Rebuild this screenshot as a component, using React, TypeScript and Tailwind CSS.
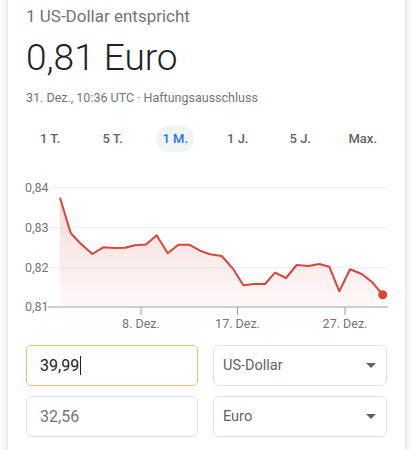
import React from "react";

const tabs = ["1 T.", "5 T.", "1 M.", "1 J.", "5 J.", "Max."];

// chart points in page coordinates
const pts: [number, number][] = [
  [60, 197.7], [70.7, 233], [80, 243], [92.3, 254], [103.3, 247.3], [115, 248],
  [125, 247.7], [135, 245.3], [146, 244.5], [156.7, 235.3], [167.7, 253.3],
  [178.3, 244.7], [189.3, 244.7], [200, 250.7], [210, 254.2], [221.7, 256],
  [232.7, 268.3], [243.3, 285.3], [254, 284], [265, 284], [275, 272.7],
  [286, 278], [296.7, 265], [308.3, 266], [319.3, 264], [329.3, 266.7],
  [339.3, 291.3], [350, 269.3], [361.7, 274], [371.7, 281.7], [382.7, 294.7],
];

const Chart = () => {
  const line = pts.map(([x, y], i) => `${i ? "L" : "M"}${x} ${y}`).join(" ");
  const area = `${line} L382.7 307 L60 307 Z`;
  const grid = [
    { y: 187.5, label: "0,84" },
    { y: 227.5, label: "0,83" },
    { y: 267.5, label: "0,82" },
  ];
  const ticks = [
    { x: 141, label: "8. Dez." },
    { x: 237.5, label: "17. Dez." },
    { x: 345, label: "27. Dez." },
  ];
  return (
    <svg viewBox="8 160 397 175" width={397} height={175} className="mt-2 block">
      <defs>
        <linearGradient id="fill" x1="0" y1="0" x2="0" y2="1">
          <stop offset="0%" stopColor="#db4437" stopOpacity="0.2" />
          <stop offset="100%" stopColor="#db4437" stopOpacity="0.03" />
        </linearGradient>
      </defs>
      {grid.map((g) => (
        <g key={g.label}>
          <line x1={49} x2={388} y1={g.y} y2={g.y} stroke="#f1f1f1" strokeWidth={1} />
          <text x={25} y={g.y + 4} fontSize={12.5} fill="#70757a" fontFamily="Roboto, sans-serif">
            {g.label}
          </text>
        </g>
      ))}
      <path d={area} fill="url(#fill)" />
      <line x1={48} x2={388} y1={307} y2={307} stroke="#9aa0a6" strokeWidth={1} />
      <text x={25} y={311} fontSize={12.5} fill="#70757a" fontFamily="Roboto, sans-serif">
        0,81
      </text>
      {ticks.map((t) => (
        <g key={t.label}>
          <line x1={t.x} x2={t.x} y1={307} y2={315} stroke="#9aa0a6" strokeWidth={1} />
          <text x={t.x} y={328} fontSize={12.5} fill="#70757a" textAnchor="middle" fontFamily="Roboto, sans-serif">
            {t.label}
          </text>
        </g>
      ))}
      <path d={line} fill="none" stroke="#db4437" strokeWidth={2} strokeLinejoin="round" />
      <circle cx={382.7} cy={294.7} r={4.5} fill="#db4437" />
    </svg>
  );
};

const Caret = () => (
  <svg width="10" height="5" viewBox="0 0 10 5">
    <path d="M0 0 L10 0 L5 5 Z" fill="#5f6368" />
  </svg>
);

export default function App() {
  return (
    <div className="h-[450px] w-[413px] overflow-hidden bg-white font-['Roboto',sans-serif]">
      <div className="mx-2 h-[470px] -mt-[10px] bg-white pt-[14px] shadow-[0_0_8px_rgba(0,0,0,0.18)]">
        <div className="px-[18px]">
          <div className="text-[17px] leading-6 text-[#70757a]">1 US-Dollar entspricht</div>
          <div className="mt-3 text-[37px] font-light leading-9 text-[#202124]">0,81 Euro</div>
          <div className="mt-[14px] text-[12.5px] leading-4 text-[#70757a]">
            31. Dez., 10:36 UTC · Haftungsausschluss
          </div>
        </div>

        <div className="mt-5 flex px-[11px]">
          {tabs.map((t) => (
            <div key={t} className="flex flex-1 justify-center">
              <span
                className={
                  t === "1 M."
                    ? "flex h-[26px] items-center rounded-full bg-[#f1f3f6] px-[6px] text-[13px] font-medium text-[#1a73e8]"
                    : "flex h-[26px] items-center px-[6px] text-[13px] font-medium text-[#5f6368]"
                }
              >
                {t}
              </span>
            </div>
          ))}
        </div>

        <Chart />

        <div className="mt-[10px] grid grid-cols-[172px_1fr] gap-x-[15px] gap-y-[10px] px-[18px]">
          <div className="flex h-[41px] items-center rounded-[5px] border border-[#ebc06f] px-[13px] text-[16px] text-[#202124]">
            <span>39,99</span>
            <span className="ml-px inline-block h-[19px] w-px bg-[#202124]" />
          </div>
          <div className="flex h-[41px] items-center justify-between rounded-[6px] border border-[#dfe1e5] pl-[9px] pr-[10px] text-[14.5px] text-[#5f6368]">
            <span>US-Dollar</span>
            <Caret />
          </div>
          <div className="flex h-[41px] items-center rounded-[5px] border border-[#dfe1e5] px-[13px] text-[16px] text-[#70757a]">
            32,56
          </div>
          <div className="flex h-[41px] items-center justify-between rounded-[6px] border border-[#dfe1e5] pl-[9px] pr-[10px] text-[14.5px] text-[#5f6368]">
            <span>Euro</span>
            <Caret />
          </div>
        </div>
      </div>
    </div>
  );
}
